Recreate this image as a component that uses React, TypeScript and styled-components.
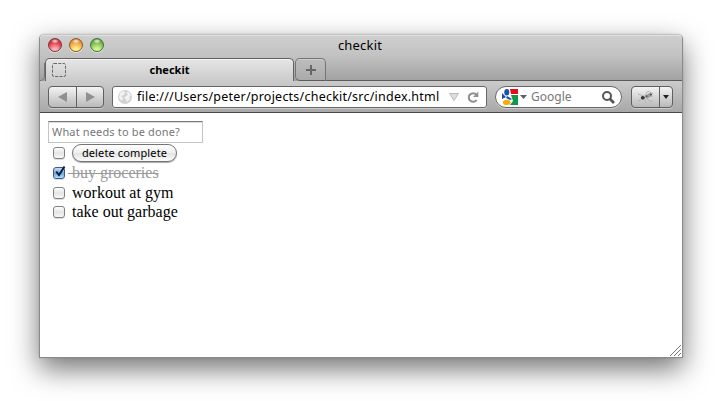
import React from "react";
import styled, { createGlobalStyle } from "styled-components";

const GlobalStyle = createGlobalStyle`
  * { box-sizing: border-box; }
  body {
    margin: 0;
    background: #fff;
    overflow: hidden;
    font-family: "Noto Sans", "Open Sans", sans-serif;
    color: #000;
  }
`;

const Desktop = styled.main`
  width: 717px;
  height: 401px;
  padding: 34px 34px 0 39px;
`;

const Window = styled.section`
  width: 644px;
  height: 324px;
  display: flex;
  flex-direction: column;
  border: 1px solid #8b8b8b;
  border-top-color: #c3c3c3;
  border-radius: 5px 5px 0 0;
  background: #fff;
  box-shadow: 0 11px 28px rgba(0, 0, 0, 0.55), 0 0 2px rgba(0, 0, 0, 0.15);
`;

const Header = styled.header`
  height: 46px;
  flex: none;
  border-radius: 4px 4px 0 0;
  background: linear-gradient(#cfcfcf, #c2c2c2 45%, #a0a0a0);
  box-shadow: inset 0 1px #e0e0e0;
`;

const TitleBar = styled.div`
  height: 23px;
  display: grid;
  grid-template-columns: 70px 1fr 72px;
  align-items: start;
`;

const Lights = styled.div`
  display: flex;
  gap: 7px;
  padding: 3px 0 0 8px;
`;

const Light = styled.span<{ $rim: string; $mid: string; $glow: string }>`
  width: 14px;
  height: 14px;
  border-radius: 50%;
  border: 1px solid ${(p) => p.$rim};
  background:
    radial-gradient(ellipse 4px 2.5px at 50% 18%, #fffd, #fff0),
    radial-gradient(circle at 50% 95%, ${(p) => p.$glow} 15%, ${(p) => p.$mid} 62%, ${(p) => p.$rim} 105%);
  box-shadow: 0 1px #ffffff70;
`;

const Title = styled.h1`
  margin: 1px 0 0;
  font-size: 13px;
  font-weight: 400;
  line-height: 19px;
  text-align: center;
  letter-spacing: 0.2px;
`;

const TabStrip = styled.div`
  height: 23px;
  display: flex;
`;

const TabLead = styled.div`
  width: 5px;
  height: 23px;
  svg { display: block; }
`;

const Tab = styled.div`
  width: 249px;
  height: 23px;
  display: grid;
  grid-template-columns: 24px 1fr 24px;
  align-items: center;
  border: 1px solid #626262;
  border-width: 1px 1px 0;
  border-radius: 5px 5px 0 0;
  background: linear-gradient(#e6e6e6, #cbcbcb);
  box-shadow: inset 0 1px #f4f4f4;
`;

const Favicon = styled.span`
  margin-left: 6px;
  display: flex;
`;

const TabTitle = styled.span`
  font-size: 11px;
  font-weight: 700;
  line-height: 20px;
  text-align: center;
`;

const NewTab = styled.button`
  width: 31px;
  height: 23px;
  margin-left: 1px;
  padding: 0;
  display: flex;
  align-items: center;
  justify-content: center;
  border: 1px solid #747474;
  border-bottom-color: #5b5b5b;
  border-radius: 5px 5px 0 5px;
  background: linear-gradient(#bdbdbd, #aaa);
  box-shadow: inset 0 1px #cfcfcf;
`;

const StripLine = styled.div`
  flex: 1;
  border-bottom: 1px solid #5c5c5c;
`;

const Toolbar = styled.nav`
  height: 32px;
  flex: none;
  display: flex;
  align-items: flex-start;
  padding: 5px 9px 0 8px;
  border-bottom: 1px solid #484848;
  background: linear-gradient(#cbcbcb, #a8a8a8);
`;

const ButtonPair = styled.div<{ $left: number }>`
  height: 22px;
  margin-left: ${(p) => p.$left}px;
  display: flex;
  border: 1px solid #606060;
  border-radius: 4px;
  background: linear-gradient(#f4f4f4, #b9b9b9);
  box-shadow: 0 1px #ffffff60;
`;

const Half = styled.button<{ $width: number }>`
  width: ${(p) => p.$width}px;
  height: 20px;
  padding: 0;
  display: flex;
  align-items: center;
  justify-content: center;
  border: 0;
  background: none;
  & + & { border-left: 1px solid #606060; }
`;

const Field = styled.div<{ $width: number; $round: number }>`
  width: ${(p) => p.$width}px;
  height: 22px;
  margin-left: 8px;
  display: flex;
  align-items: center;
  border: 1px solid #666;
  border-radius: ${(p) => p.$round}px;
  background: #fff;
  box-shadow: 0 1px #ffffff60;
  overflow: hidden;
  svg { flex: none; }
`;

const Glyph = styled.svg<{ $left: number }>`
  margin-left: ${(p) => p.$left}px;
`;

const Address = styled.span`
  width: 309px;
  margin-left: 5px;
  font-size: 12.5px;
  letter-spacing: 0.23px;
  line-height: 20px;
  white-space: nowrap;
`;

const SearchText = styled.span`
  width: 69px;
  margin-left: 4px;
  font-size: 12px;
  line-height: 20px;
  color: #777;
`;

const Page = styled.div`
  flex: 1;
  position: relative;
  padding: 8px 0 0 8px;
  font: 16px "Liberation Serif", serif;
`;

const NewItem = styled.input`
  display: block;
  width: 155px;
  height: 22px;
  margin: 0;
  padding: 0 3px 1px;
  border: 1px solid #c4c4c4;
  border-top-color: #777;
  box-shadow: inset 0 1px #ddd;
  font: 11px "Noto Sans", sans-serif;
  letter-spacing: 0.15px;
  &::placeholder { color: #777; opacity: 1; }
`;

const Row = styled.label<{ $height: number }>`
  height: ${(p) => p.$height}px;
  display: flex;
  align-items: center;
  padding-left: 5px;
`;

const Box = styled.span<{ $checked?: boolean }>`
  width: 12px;
  height: 12px;
  flex: none;
  border: 1px solid ${(p) => (p.$checked ? "#405988" : "#808080")};
  border-radius: 3px;
  background: ${(p) => (p.$checked ? "linear-gradient(#c7dcf5, #6fa9e5 55%, #b0e4ff)" : "linear-gradient(#fff, #e4e4e4 50%, #f8f8f8)")};
  box-shadow: 0 1px #0002;
  svg { display: block; margin: -3px 0 0 0; overflow: visible; }
`;

const Label = styled.span<{ $done?: boolean }>`
  margin-left: ${(p) => (p.$done ? 3 : 7)}px;
  line-height: 18px;
  white-space: pre;
  color: ${(p) => (p.$done ? "#999" : "#000")};
  text-decoration: ${(p) => (p.$done ? "line-through" : "none")};
`;

const Pill = styled.button`
  width: 105px;
  height: 18px;
  margin-left: 7px;
  padding: 0;
  border: 1px solid #747474;
  border-radius: 9px;
  background: linear-gradient(#fff, #efefef 48%, #e3e3e3 52%, #fbfbfb);
  box-shadow: 0 1px 1px #0005;
  font: 11px/15px "Noto Sans", sans-serif;
  letter-spacing: 0.13px;
  color: #000;
  white-space: nowrap;
`;

const Grip = styled.svg`
  position: absolute;
  right: 1px;
  bottom: 1px;
`;

const items = [
  { text: " buy groceries", done: true, height: 21 },
  { text: "workout at gym", done: false, height: 20 },
  { text: "take out garbage", done: false, height: 18 },
];

export default function App() {
  return (
    <Desktop>
      <GlobalStyle />
      <Window>
        <Header>
          <TitleBar>
            <Lights>
              <Light $rim="#82323a" $mid="#e33c46" $glow="#ffb4b8" />
              <Light $rim="#9a5625" $mid="#eca443" $glow="#fff48c" />
              <Light $rim="#44762d" $mid="#7cba4e" $glow="#d2f795" />
            </Lights>
            <Title>checkit</Title>
          </TitleBar>
          <TabStrip>
            <TabLead>
              <svg width="5" height="23">
                <path d="M0 22.5H1Q4.5 22 4.5 17V5" fill="none" stroke="#777" />
              </svg>
            </TabLead>
            <Tab>
              <Favicon>
                <svg width="14" height="14">
                  <rect x=".5" y=".5" width="13" height="13" rx="1.5" fill="none" stroke="#666" strokeDasharray="3 1.3" />
                </svg>
              </Favicon>
              <TabTitle>checkit</TabTitle>
            </Tab>
            <NewTab aria-label="New tab">
              <svg width="10" height="10">
                <path d="M5 0V10M0 5H10" stroke="#666" strokeWidth="2" />
              </svg>
            </NewTab>
            <StripLine />
          </TabStrip>
        </Header>
        <Toolbar>
          <ButtonPair $left={0}>
            <Half $width={27} aria-label="Back">
              <svg width="9" height="10"><path d="M0 5L9 0V10Z" fill="#909090" /></svg>
            </Half>
            <Half $width={27} aria-label="Forward">
              <svg width="9" height="10"><path d="M9 5L0 0V10Z" fill="#909090" /></svg>
            </Half>
          </ButtonPair>
          <Field $width={375} $round={3}>
            <Glyph $left={5} width="14" height="14" viewBox="0 0 14 14">
              <circle cx="7" cy="7" r="7" fill="#d2d2d2" />
              <path d="M2 3L5 1L7 2L6 5L3 6L5 8L4 11L1 8ZM8 2L11 2L13 6L11 7L12 9L9 12L8 9L6 8L8 6L10 5Z" fill="#f2f2f2" />
            </Glyph>
            <Address>file:///Users/peter/projects/checkit/src/index.html</Address>
            <Glyph $left={3} width="10" height="8">
              <path d="M.5 .5H9.5L5 7.5Z" fill="#ddd" stroke="#bbb" />
            </Glyph>
            <Glyph $left={8} width="12" height="13" viewBox="0 0 12 13">
              <path d="M9.3 3.6A4.3 4.3 0 1 0 9.6 9" fill="none" stroke="#909090" strokeWidth="2.1" />
              <path d="M11.3 .5V6H6Z" fill="#909090" />
            </Glyph>
          </Field>
          <Field $width={127} $round={11}>
            <Glyph $left={6} width="16" height="16" viewBox="0 0 16 16">
              <path d="M8 0H16V5H9Z" fill="#e60d19" />
              <path d="M9 6H16V16H8L11 12Z" fill="#11984a" />
              <path d="M0 4L4 8L0 10Z" fill="#164fae" />
              <ellipse cx="4.8" cy="3.2" rx="2.5" ry="3.2" fill="#1850b5" />
              <path d="M5 7L10 10L8 11L4 9Z" fill="#1850b5" />
              <ellipse cx="4.8" cy="13.4" rx="3.8" ry="2.6" fill="#f6ad0a" />
            </Glyph>
            <Glyph $left={2} width="7" height="4"><path d="M0 0H7L3.5 4Z" fill="#606060" /></Glyph>
            <SearchText>Google</SearchText>
            <Glyph $left={2} width="13" height="13" viewBox="0 0 13 13">
              <circle cx="5" cy="5" r="4" fill="none" stroke="#555" strokeWidth="2" />
              <path d="M8 8L12 12" stroke="#555" strokeWidth="2.6" />
            </Glyph>
          </Field>
          <ButtonPair $left={9}>
            <Half $width={27} aria-label="Bookmarks">
              <svg width="16" height="13" viewBox="0 0 16 13">
                <path d="M0 3L6 5M0 10L5 8M6 8L8 12M9 8L14 11M4 7L15 5M7 5L9 1L12 0M10 4L15 2" fill="none" stroke="#aaa" strokeWidth=".8" />
                <ellipse cx="4.8" cy="6.8" rx="2" ry="1.7" fill="#333" />
                <path d="M7 5L13 1L14 4L9 8Z" fill="#999" />
                <circle cx="13" cy="3.6" r=".9" fill="#444" />
                <circle cx="8.5" cy="5.2" r=".9" fill="#555" />
              </svg>
            </Half>
            <Half $width={13} aria-label="Bookmarks menu">
              <svg width="6" height="4"><path d="M0 0H6L3 4Z" fill="#222" /></svg>
            </Half>
          </ButtonPair>
        </Toolbar>
        <Page>
          <NewItem placeholder="What needs to be done?" />
          <Row $height={19}>
            <Box />
            <Pill>delete complete</Pill>
          </Row>
          {items.map((item) => (
            <Row key={item.text} $height={item.height}>
              <Box $checked={item.done}>
                {item.done && (
                  <svg width="11" height="12">
                    <path d="M2.2 6.5L5 10L10.5 1.5" fill="none" stroke="#101d35" strokeWidth="2" />
                  </svg>
                )}
              </Box>
              <Label $done={item.done}>{item.text}</Label>
            </Row>
          ))}
          <Grip width="11" height="11">
            <path d="M0 11L11 0M4 11L11 4M8 11L11 8" stroke="#777" />
          </Grip>
        </Page>
      </Window>
    </Desktop>
  );
}
